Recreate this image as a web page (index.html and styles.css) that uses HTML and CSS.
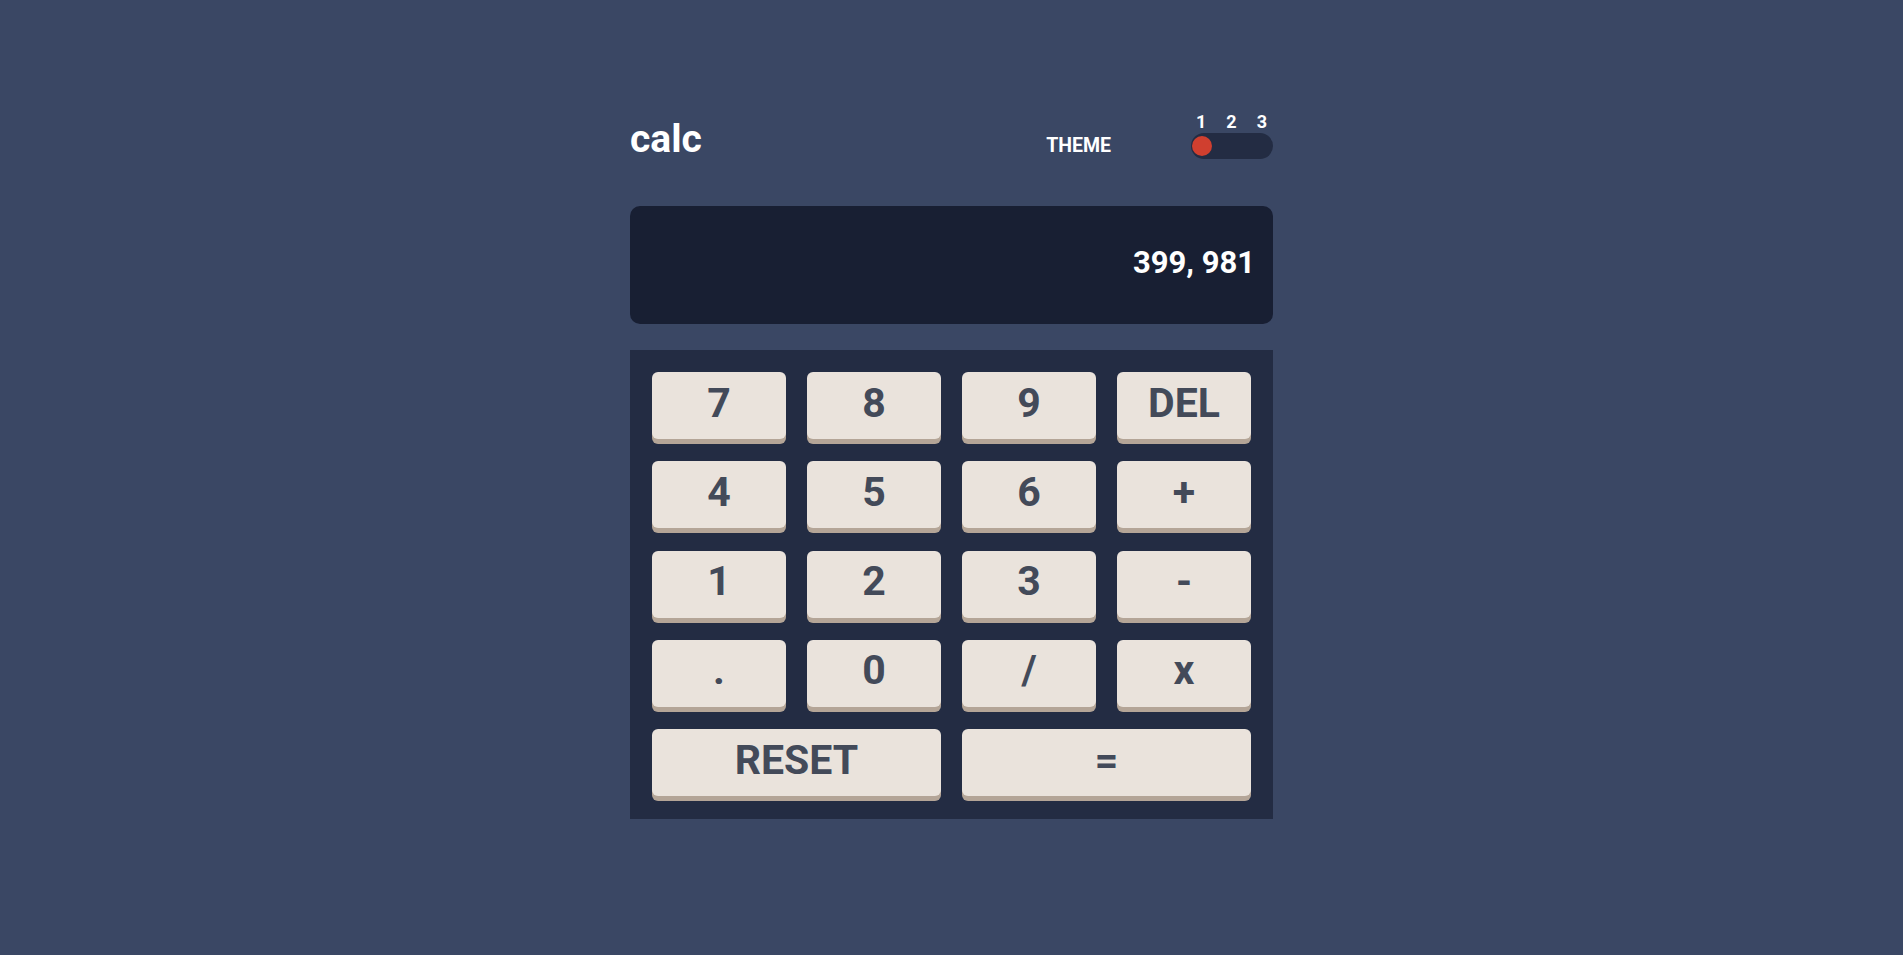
FILE: index.html
```html
<!DOCTYPE html>
<html lang="en">
<head>
<meta charset="utf-8">
<title>calc</title>
<link rel="stylesheet" href="styles.css">
</head>
<body>
<main class="calc">
  <header class="header">
    <h1 class="logo">calc</h1>
    <div class="theme">
      <span class="theme-label">THEME</span>
      <div class="switch">
        <div class="switch-nums"><span>1</span><span>2</span><span>3</span></div>
        <div class="switch-track"><span class="switch-knob"></span></div>
      </div>
    </div>
  </header>
  <section class="screen"><span class="screen-value">399, 981</span></section>
  <section class="keypad">
    <button class="key">7</button>
    <button class="key">8</button>
    <button class="key">9</button>
    <button class="key">DEL</button>
    <button class="key">4</button>
    <button class="key">5</button>
    <button class="key">6</button>
    <button class="key">+</button>
    <button class="key">1</button>
    <button class="key">2</button>
    <button class="key">3</button>
    <button class="key">-</button>
    <button class="key">.</button>
    <button class="key">0</button>
    <button class="key">/</button>
    <button class="key">x</button>
    <button class="key key-wide">RESET</button>
    <button class="key key-wide">=</button>
  </section>
</main>
</body>
</html>
```

FILE: styles.css
```css
* { box-sizing: border-box; }
html, body { margin: 0; padding: 0; }
body {
  background: #3a4764;
  font-family: Roboto, "Liberation Sans", sans-serif;
  font-weight: 700;
  color: #ffffff;
  min-height: 955px;
}
.calc {
  width: 643px;
  margin: 0 auto;
  padding-top: 113px;
}
.header {
  display: flex;
  justify-content: space-between;
  align-items: flex-end;
}
.logo {
  margin: 0;
  font-size: 39px;
  line-height: 1;
  font-weight: 700;
}
.theme {
  display: flex;
  align-items: flex-end;
  gap: 80px;
}
.theme-label {
  font-size: 19.5px;
  line-height: 1;
  margin-bottom: 4px;
}
.switch { width: 82px; }
.switch-nums {
  display: flex;
  justify-content: space-between;
  padding: 0 6px 0 5px;
  font-size: 18px;
  line-height: 18px;
  margin-bottom: 2px;
}
.switch-track {
  height: 26px;
  border-radius: 13px;
  background: #232c43;
  display: flex;
  align-items: center;
  padding-left: 1px;
}
.switch-knob {
  width: 20px;
  height: 20px;
  border-radius: 50%;
  background: #d03f2f;
}
.screen {
  margin-top: 47px;
  height: 118px;
  border-radius: 10px;
  background: #181f33;
  display: flex;
  align-items: center;
  justify-content: flex-end;
  padding: 0 18px 5px 0;
}
.screen-value {
  font-size: 31px;
  line-height: 1;
}
.keypad {
  margin-top: 26px;
  background: #232c43;
  padding: 22px 22px 23px;
  display: grid;
  grid-template-columns: repeat(4, 1fr);
  grid-auto-rows: 67px;
  column-gap: 21px;
  row-gap: 22.25px;
}
.key {
  border: 0;
  margin: 0;
  border-radius: 6px;
  background: #eae3dc;
  box-shadow: 0 5px 0 #b4a597;
  color: #434a59;
  font-family: Roboto, "Liberation Sans", sans-serif;
  font-weight: 700;
  font-size: 41px;
  line-height: 1;
  padding: 0 0 5px;
  display: flex;
  align-items: center;
  justify-content: center;
}
.key-wide { grid-column: span 2; }
```
